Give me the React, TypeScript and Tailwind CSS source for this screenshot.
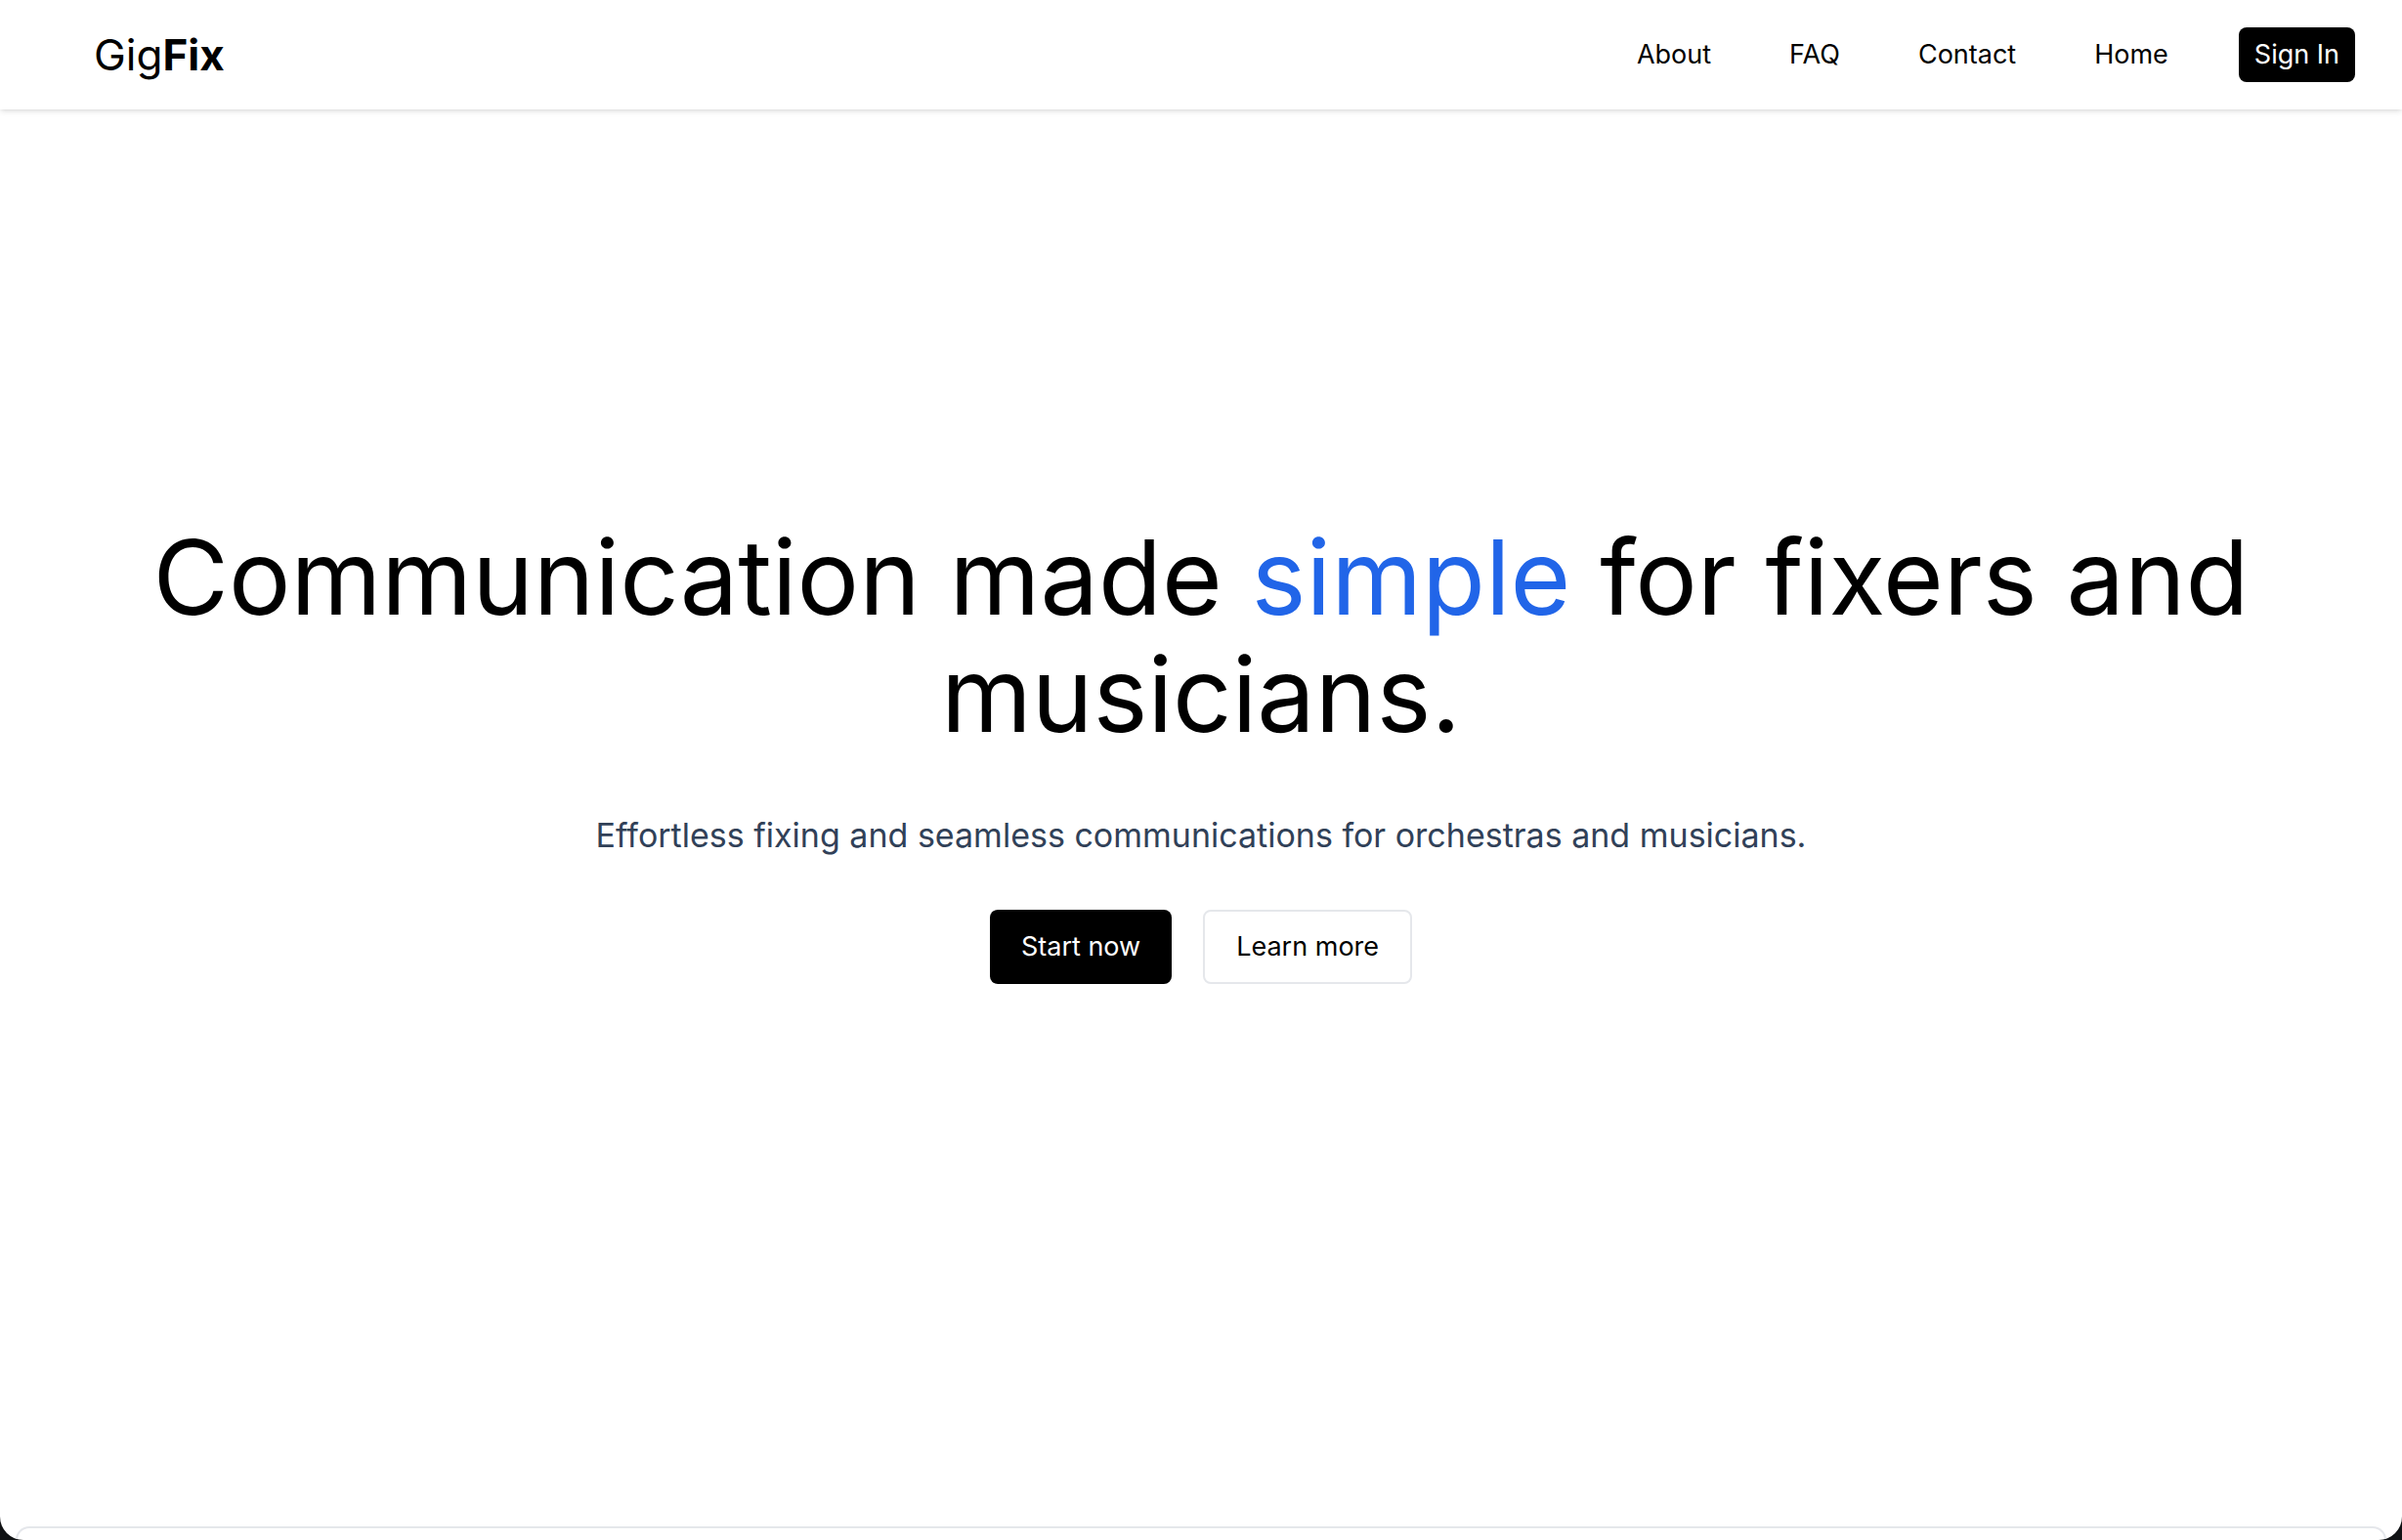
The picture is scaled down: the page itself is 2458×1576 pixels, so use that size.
const links = ["About", "FAQ", "Contact", "Home"];

function Header() {
  return (
    <header className="flex h-28 shrink-0 items-center justify-between bg-white pr-12 pl-24 shadow-[0_2px_6px_rgba(0,0,0,0.1),0_2px_4px_-2px_rgba(0,0,0,0.1)]">
      <a href="#" className="text-[44px] leading-14">
        Gig<span className="font-bold">Fix</span>
      </a>
      <nav className="flex items-center gap-18">
        <ul className="flex items-center gap-20">
          {links.map((label) => (
            <li key={label}>
              <a href={`#${label.toLowerCase()}`}>{label}</a>
            </li>
          ))}
        </ul>
        <button type="button" className="h-14 rounded-lg bg-black px-4 text-white">
          Sign In
        </button>
      </nav>
    </header>
  );
}

function Hero() {
  return (
    <section className="flex flex-1 flex-col items-center justify-center px-8 pb-34 text-center">
      <h1 className="text-[106px] leading-30">
        Communication made <span className="text-[#2165e8]">simple</span> for fixers and
        <br />
        musicians.
      </h1>
      <p className="mt-14 text-[34px] leading-14 text-slate-700">
        Effortless fixing and seamless communications for orchestras and musicians.
      </p>
      <div className="mt-12 flex gap-8">
        <button type="button" className="h-19 rounded-lg bg-black px-8 text-white">
          Start now
        </button>
        <button type="button" className="h-19 rounded-lg border-2 border-gray-200 bg-white px-8">
          Learn more
        </button>
      </div>
    </section>
  );
}

export default function App() {
  return (
    <div className="h-screen bg-[#101214]">
      <div className="flex h-full flex-col overflow-hidden rounded-b-3xl bg-white font-['Inter',sans-serif] text-[27px] leading-10 text-black">
        <Header />
        <main className="flex flex-1 flex-col">
          <Hero />
          <div className="mx-4 h-3.5 rounded-t-2xl border-2 border-b-0 border-gray-200" />
        </main>
      </div>
    </div>
  );
}
